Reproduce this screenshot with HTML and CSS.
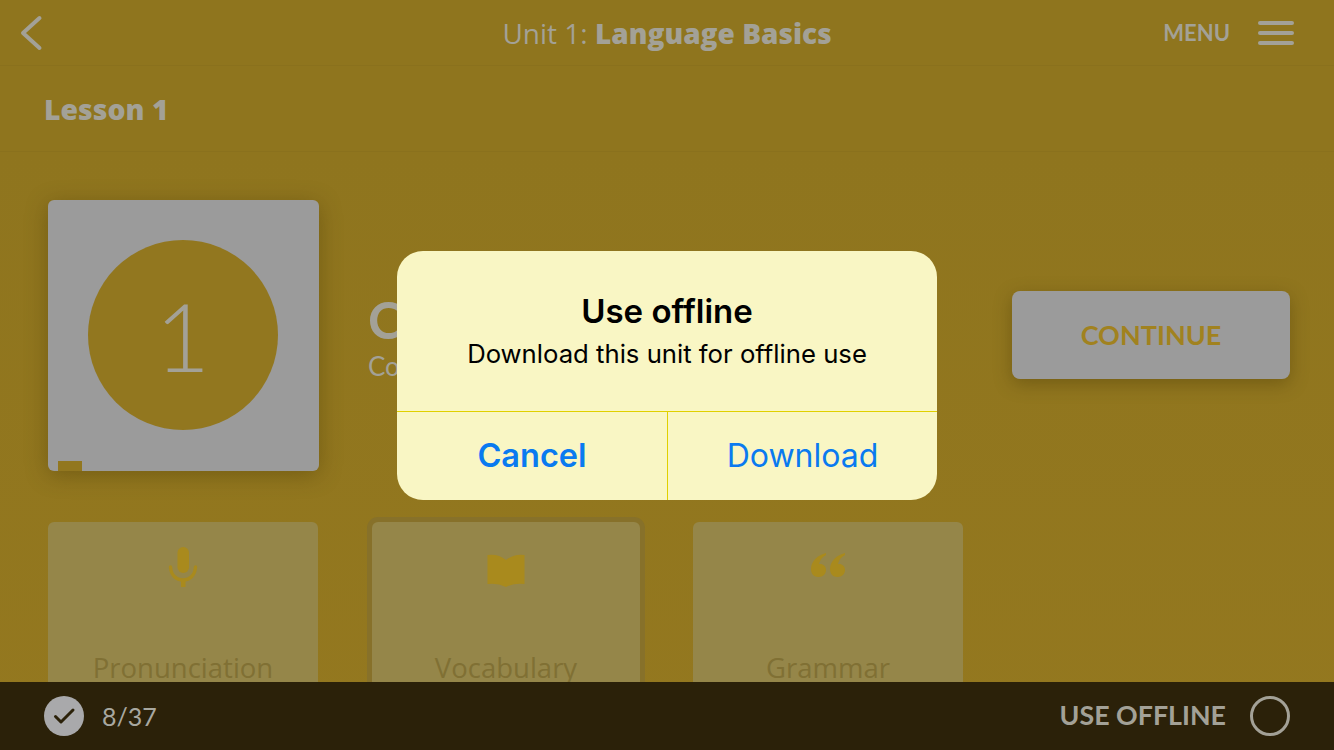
FILE: index.html
```html
<!DOCTYPE html>
<html lang="en">
<head>
    <meta charset="UTF-8">
    <meta name="viewport" content="width=device-width, initial-scale=1.0">
    <title>Unit 1: Language Basics</title>
    <link rel="stylesheet" href="styles.css">
</head>
<body>
    <div class="app">
        <header class="top-bar">
            <svg class="back-icon" width="24" height="36" viewBox="0 0 24 36">
                <path d="M 20.500 3 L 4 18 L 20.500 33" fill="none" stroke="#a3a197" stroke-width="4" stroke-linecap="round" stroke-linejoin="round"/>
            </svg>
            <div class="unit-title">Unit 1: <b>Language Basics</b></div>
            <div class="menu">
                <span class="menu-label">MENU</span>
                <span class="burger"><i></i><i></i><i></i></span>
            </div>
        </header>

        <div class="lesson-bar">Lesson 1</div>

        <main class="content">
            <section class="hero">
                <div class="lesson-card">
                    <div class="lesson-circle">1</div>
                    <span class="lesson-tag"></span>
                </div>
                <div class="hero-text">
                    <div class="hero-title">Core</div>
                    <div class="hero-sub">Core</div>
                </div>
                <button class="continue-button">CONTINUE</button>
            </section>

            <section class="tiles">
                <div class="tile">
                    <svg class="tile-icon" width="30" height="42" viewBox="0 0 30 42">
                        <rect x="9.500" y="0" width="11.500" height="26" rx="5.700" fill="#a98a1d"/>
                        <path d="M 2.500 20 C 3 28 8 33 15 33 C 22 33 27 28 27.500 20" fill="none" stroke="#a98a1d" stroke-width="3.400" stroke-linecap="round"/>
                        <rect x="13" y="33" width="4.500" height="7" fill="#a98a1d"/>
                    </svg>
                    <div class="tile-label">Pronunciation</div>
                </div>
                <div class="tile tile-active">
                    <svg class="tile-icon" width="38" height="42" viewBox="0 0 38 42">
                        <path d="M 0.500 8 Q 11 6.500 19 13 Q 27 6.500 37.500 8 L 37.500 37 Q 28 35.500 19 40 Q 10 35.500 0.500 37 Z" fill="#a98a1d"/>
                    </svg>
                    <div class="tile-label">Vocabulary</div>
                </div>
                <div class="tile">
                    <svg class="tile-icon" width="38" height="42" viewBox="0 0 38 42">
                        <path d="M 17 6 C 9 8 2 14 2 22 C 2 27 5 30 9.500 30 C 14 30 17 27 17 23 C 17 19 14 16.500 10 17 C 11 13 13 10 17 8 Z" fill="#a98a1d"/>
                        <path d="M 36 6 C 28 8 21 14 21 22 C 21 27 24 30 28.500 30 C 33 30 36 27 36 23 C 36 19 33 16.500 29 17 C 30 13 32 10 36 8 Z" fill="#a98a1d"/>
                    </svg>
                    <div class="tile-label">Grammar</div>
                </div>
            </section>
        </main>

        <footer class="bottom-bar">
            <div class="progress">
                <span class="check-badge">
                    <svg width="24" height="20" viewBox="0 0 24 20">
                        <path d="M 3.500 10.500 L 9 16 L 21 4" fill="none" stroke="#2b2109" stroke-width="3" stroke-linecap="round" stroke-linejoin="round"/>
                    </svg>
                </span>
                <span class="progress-count">8/37</span>
            </div>
            <div class="offline">
                <span class="offline-label">USE OFFLINE</span>
                <span class="offline-toggle"></span>
            </div>
        </footer>

        <div class="overlay">
            <div class="dialog">
                <div class="dialog-body">
                    <div class="dialog-title">Use offline</div>
                    <div class="dialog-message">Download this unit for offline use</div>
                </div>
                <div class="dialog-actions">
                    <button class="dialog-button dialog-cancel">Cancel</button>
                    <button class="dialog-button">Download</button>
                </div>
            </div>
        </div>
    </div>
</body>
</html>
```

FILE: styles.css
```css
* {
    margin: 0;
    padding: 0;
    box-sizing: border-box;
}

body {
    font-family: 'Lato', 'Open Sans', sans-serif;
    background: #8f751e;
    overflow: hidden;
}

.app {
    position: relative;
    width: 1334px;
    height: 750px;
    display: flex;
    flex-direction: column;
    overflow: hidden;
    background: #8f751e;
}

.top-bar {
    flex: 0 0 66px;
    display: flex;
    align-items: center;
    justify-content: space-between;
    padding: 0 40px 0 19px;
    border-bottom: 1px solid #8a711d;
    position: relative;
}

.back-icon {
    display: block;
}

.unit-title {
    position: absolute;
    left: 0;
    right: 0;
    text-align: center;
    font-family: 'Open Sans', sans-serif;
    font-size: 28px;
    color: #a3a197;
    pointer-events: none;
}

.unit-title b {
    font-weight: 800;
}

.menu {
    display: flex;
    align-items: center;
    gap: 28px;
}

.menu-label {
    font-size: 22px;
    font-weight: 700;
    color: #a3a197;
}

.burger {
    display: flex;
    flex-direction: column;
    gap: 6px;
    width: 36px;
}

.burger i {
    display: block;
    height: 4px;
    border-radius: 2px;
    background: #a3a197;
}

.lesson-bar {
    flex: 0 0 86px;
    display: flex;
    align-items: center;
    padding-left: 44px;
    border-bottom: 1px solid #8a711d;
    font-family: 'Open Sans', sans-serif;
    font-size: 28.400px;
    font-weight: 800;
    color: #a3a197;
}

.content {
    flex: 1;
    min-height: 0;
    overflow: hidden;
    padding: 48px 44px 0 48px;
    background: linear-gradient(180deg, #8f751e 0%, #94781f 100%);
}

.hero {
    display: flex;
    align-items: center;
}

.lesson-card {
    position: relative;
    width: 271px;
    height: 271px;
    display: flex;
    align-items: center;
    justify-content: center;
    background: #9b9b9b;
    border-radius: 6px;
    box-shadow: 0 4px 22px rgba(60, 45, 0, 0.35);
}

.lesson-circle {
    width: 190px;
    height: 190px;
    margin: 0 2px 2px 0;
    border-radius: 50%;
    background: #92771f;
    display: flex;
    align-items: center;
    justify-content: center;
    font-size: 95px;
    font-weight: 300;
    color: #a3a197;
}

.lesson-tag {
    position: absolute;
    left: 10px;
    bottom: 0;
    width: 24px;
    height: 10px;
    background: #92771f;
}

.hero-text {
    flex: 1;
    padding-left: 49px;
    color: #a3a197;
    overflow: hidden;
}

.hero-title {
    font-size: 52px;
    font-weight: 700;
    line-height: 60px;
}

.hero-sub {
    font-size: 26px;
    line-height: 34px;
    margin-top: 0;
}

.continue-button {
    width: 278px;
    height: 88px;
    margin-bottom: 2px;
    border: none;
    border-radius: 8px;
    background: #9b9b9b;
    color: #a1821f;
    font-family: inherit;
    font-size: 27px;
    font-weight: 700;
    box-shadow: 0 5px 18px rgba(60, 45, 0, 0.35);
}

.tiles {
    display: flex;
    gap: 53px;
    margin-top: 51px;
}

.tile {
    width: 270px;
    height: 220px;
    flex: none;
    background: #958649;
    border-radius: 6px;
    text-align: center;
    padding-top: 25px;
}

.tile-active {
    width: 268px;
    margin-left: 1px;
    box-shadow: 0 0 0 5px #87712a;
}

.tile-icon {
    display: block;
    margin: 0 auto;
}

.tile-label {
    margin-top: 60px;
    font-family: 'Open Sans', sans-serif;
    font-size: 27.500px;
    color: #807034;
}

.bottom-bar {
    position: absolute;
    left: 0;
    right: 0;
    bottom: 0;
    height: 68px;
    display: flex;
    align-items: center;
    justify-content: space-between;
    padding: 0 44px;
    background: #2b2109;
}

.progress {
    display: flex;
    align-items: center;
    gap: 18px;
}

.check-badge {
    width: 40px;
    height: 40px;
    border-radius: 50%;
    background: #a9a9ab;
    display: flex;
    align-items: center;
    justify-content: center;
}

.progress-count {
    font-size: 25px;
    color: #a8a8a0;
}

.offline {
    display: flex;
    align-items: center;
    gap: 24px;
}

.offline-label {
    font-size: 26.800px;
    font-weight: 700;
    color: #a3a197;
    margin-bottom: 2px;
}

.offline-toggle {
    width: 40px;
    height: 40px;
    border-radius: 50%;
    border: 3px solid #a3a197;
}

.overlay {
    position: absolute;
    inset: 0;
    display: flex;
    align-items: center;
    justify-content: center;
}

.dialog {
    width: 540px;
    height: 249px;
    background: #f9f6c4;
    border-radius: 26px;
    overflow: hidden;
    display: flex;
    flex-direction: column;
    font-family: 'Inter', 'Roboto', sans-serif;
}

.dialog-body {
    flex: 0 0 161px;
    padding-top: 40px;
    text-align: center;
    color: #000;
    border-bottom: 1px solid #e0d000;
}

.dialog-title {
    font-size: 33px;
    font-weight: 600;
    line-height: 40px;
}

.dialog-message {
    font-size: 25.700px;
    line-height: 32px;
    margin-top: 7px;
}

.dialog-actions {
    flex: 1;
    display: grid;
    grid-template-columns: 271px 1fr;
}

.dialog-button {
    border: none;
    background: none;
    color: #0a7af0;
    font-family: inherit;
    font-size: 32px;
}

.dialog-cancel {
    font-size: 32.500px;
    font-weight: 600;
    border-right: 1px solid #e0d000;
}
```
